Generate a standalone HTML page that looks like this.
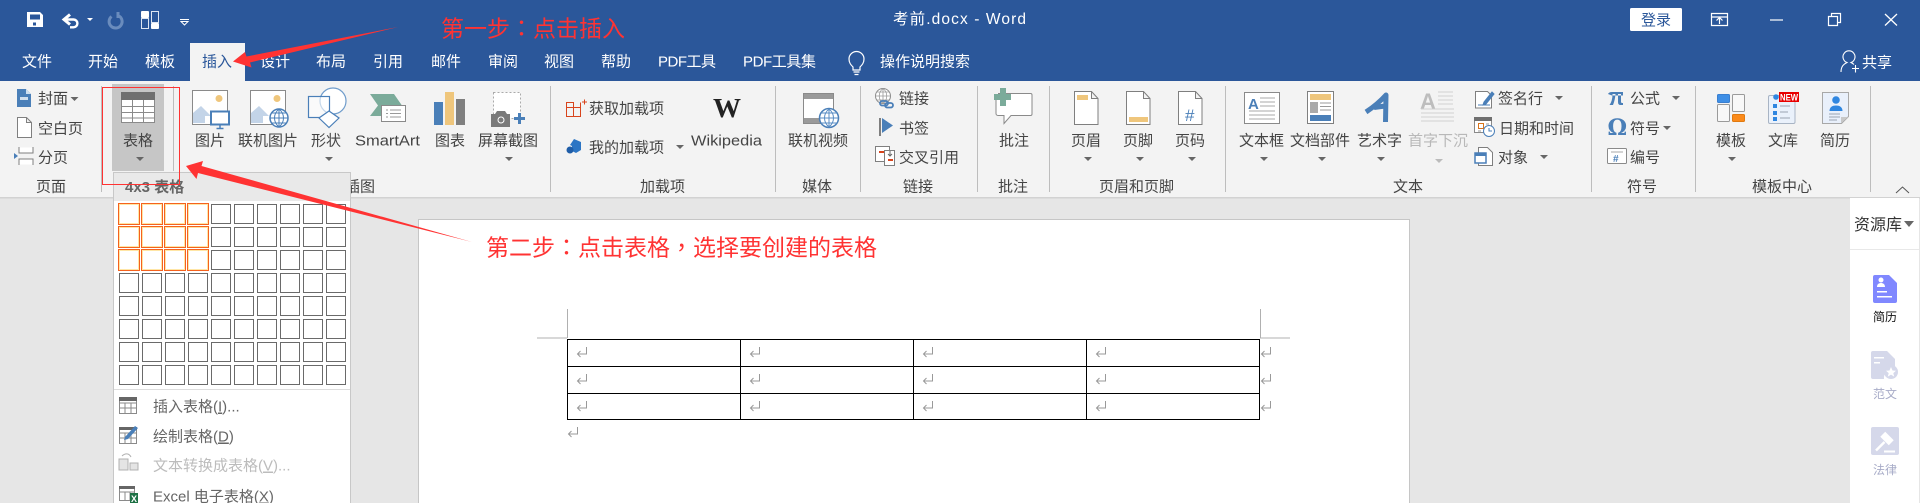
<!DOCTYPE html>
<html lang="zh"><head><meta charset="utf-8"><title>考前.docx - Word</title>
<style>
html,body{margin:0;padding:0;background:#e6e6e6;overflow:hidden;width:1920px;height:503px}
svg{display:block}
text{font-family:"Liberation Sans","Noto Sans CJK SC",sans-serif;font-size:15px;fill:#444}
.w text{fill:#fff}
.ln{fill:none;stroke:#7f7f7f;stroke-width:1}
.b{fill:#4a7fb8}
.lb{fill:#c3d4e8}
.tan{fill:#efc67c}
.g{fill:#7f7f7f}
.red text{fill:#f33;font-size:23px}
.tc{font-family:"Noto Sans CJK TC",sans-serif}
</style></head><body>
<svg width="1920" height="503" viewBox="0 0 1920 503" xmlns="http://www.w3.org/2000/svg">
<defs>
<path id="c" d="M-4-2h8l-4 4z" fill="#666"/>
<path id="r" d="M10.5 0v7H1.5M4.5 4l-3 3 3 3" fill="none" stroke="#999" stroke-width="1"/>
<pattern id="cell" x="119" y="204" width="23" height="23" patternUnits="userSpaceOnUse"><rect x=".5" y=".5" width="19" height="19" fill="#fff" stroke="#6a6a6a"/></pattern>
<pattern id="cellh" x="118" y="203" width="23" height="23" patternUnits="userSpaceOnUse"><rect x=".5" y=".5" width="21" height="21" fill="#fff" stroke="#f5621e"/><rect x="1.5" y="1.5" width="19" height="19" fill="#fff" stroke="#ffe6a6"/></pattern>
</defs>

<!-- backgrounds -->
<rect width="1920" height="503" fill="#e6e6e6"/>
<rect width="1920" height="81" fill="#2b579a"/>
<rect y="81" width="1920" height="116" fill="#f3f3f3"/>
<rect y="197" width="1920" height="1.5" fill="#d2d2d2"/>
<rect x="190" y="43" width="55" height="38" fill="#f3f3f3"/>

<!-- quick access -->
<path d="M27 12h13l3 3v12H27z M30 14.500v5h10v-5z M33 22.500v3h3v-3z" fill="#fff" fill-rule="evenodd"/>
<path d="M70 14.500l-6 5 6 5" fill="none" stroke="#fff" stroke-width="3"/>
<path d="M65 19.500h8.500a3.800 3.800 0 0 1 0 7.800H70" fill="none" stroke="#fff" stroke-width="2.400"/>
<path d="M87 18h6l-3 3z" fill="#fff"/>
<path d="M111.500 16.500a6.500 6.500 0 1 0 7.500-.5M118 12v6" fill="none" stroke="#6a8cbd" stroke-width="3"/>
<rect x="141" y="11" width="8" height="7" rx="1" fill="#fff"/><rect x="141.500" y="18.500" width="7" height="10" fill="none" stroke="#dfe6f2"/>
<rect x="151.500" y="11.500" width="7" height="11" fill="none" stroke="#dfe6f2"/><rect x="151" y="23" width="8" height="6" rx="1" fill="#fff"/>
<path d="M180 19.500h9M181 21.500h7l-3.500 3.500z" fill="none" stroke="#fff"/>

<!-- title and window controls -->
<g class="w">
<text x="893" y="24" textLength="133" lengthAdjust="spacing" style="font-size:15.500px">考前.docx - Word</text>
<text x="22" y="66.500">文件</text><text x="88" y="66.500">开始</text><text x="145" y="66.500">模板</text>
<text x="260" y="66.500">设计</text><text x="316" y="66.500">布局</text><text x="373" y="66.500">引用</text>
<text x="431" y="66.500">邮件</text><text x="488" y="66.500">审阅</text><text x="544" y="66.500">视图</text>
<text x="601" y="66.500">帮助</text><text x="658" y="66.500" textLength="58">PDF工具</text><text x="743" y="66.500" textLength="73">PDF工具集</text>
<text x="880" y="66.500">操作说明搜索</text><text x="1862" y="67.500">共享</text>
</g>
<text x="202" y="66.500" style="fill:#2b579a">插入</text>
<path d="M853 70v-3c-2-2-4-4-4-8a7.500 7.500 0 0 1 15 0c0 4-2 6-4 8v3zM853.500 72h6M854.500 74.500h4" fill="none" stroke="#fff" stroke-width="1.200"/>
<rect x="1630" y="8" width="52" height="23" rx="1.500" fill="#fff"/>
<text x="1641" y="25" style="fill:#2b579a">登录</text>
<path d="M1711.500 13.500h16v12h-16zM1711.500 17h16M1719.500 24v-6M1716.500 20.500l3-3 3 3" fill="none" stroke="#fff" stroke-width="1.200"/>
<path d="M1770 20h13" stroke="#fff" stroke-width="1.200"/>
<path d="M1828.500 16.500h9v9h-9zM1831.500 16.500v-3h9v9h-3" fill="none" stroke="#fff" stroke-width="1.200"/>
<path d="M1885 14l12 11.500M1897 14l-12 11.500" stroke="#fff" stroke-width="1.300"/>
<path d="M1841 72c0-6 3-8 6-9.500a6 6 0 1 1 4 0c1 .5 2 1 3 2M1852 68.500h7M1855.500 65v7.500" fill="none" stroke="#fff" stroke-width="1.100"/>

<!-- group separators -->
<g stroke="#bdbdbd" stroke-width="1">
<path d="M101.500 86v106M173.500 86v85M550.500 86v106M775.500 86v106M860.500 86v106M977.500 86v106M1049.500 86v106M1225.500 86v106M1591.500 86v106M1695.500 86v106M1870.500 86v106"/>
</g>

<!-- table button highlight -->
<rect x="112" y="84" width="52" height="87" fill="#c6c6c6"/>

<!-- page group -->
<path d="M17 89h9l5 5v13H17z" class="b"/><path d="M20 97h8v3h-8z" fill="#fff" opacity=".75"/><path d="M26 89v5h5z" fill="#cfe0f0"/>
<text x="38" y="103.500">封面</text><use href="#c" x="74.500" y="99"/>
<path d="M17.500 117.500h9l5 5v15h-14zM26.500 117.500v5h5" fill="#fff" stroke="#7f7f7f"/>
<text x="38" y="133.500">空白页</text>
<path d="M19 147.500h14v6H19zM19 158.500h14v6H19z" fill="#fff"/><path d="M19 147v6h14v-6M19 165v-6h14v6" fill="none" stroke="#7f7f7f"/><path d="M14 153l4 3-4 3z" class="b"/>
<text x="38" y="162.500">分页</text>
<text x="36" y="191.500">页面</text>

<!-- table -->
<rect x="121" y="92" width="34" height="31" fill="#fff"/>
<rect x="121" y="92" width="34" height="8" fill="#6f6f6f"/>
<path d="M121.500 100v22.500h33V100M121 106.500h34M121 112.500h34M121 118h34M132.500 100v23M143.500 100v23" fill="none" stroke="#8a8a8a"/>
<text x="123" y="145.500">表格</text><use href="#c" x="140" y="159"/>

<!-- illustrations -->
<rect x="192.500" y="90.500" width="35" height="34" fill="#fff" stroke="#8a8a8a"/>
<circle cx="219" cy="98.500" r="3.500" class="tan"/>
<path d="M193 123v-10l8-7 10 10h-6v7z" class="lb"/>
<rect x="211" y="111.500" width="18" height="13" fill="#fff" stroke="#4a7fb8" stroke-width="2"/>
<path d="M220 125v3M216.500 128.500h7" stroke="#4a7fb8" stroke-width="1.500"/>
<text x="195" y="145.500">图片</text>

<rect x="250.500" y="90.500" width="35" height="34" fill="#fff" stroke="#8a8a8a"/>
<circle cx="277" cy="98.500" r="3.500" class="tan"/>
<path d="M251 123v-10l8-7 10 10h-6v7z" class="lb"/>
<circle cx="279" cy="118" r="9" fill="#fff" stroke="#4a7fb8" stroke-width="1.500"/>
<path d="M270 118h18M271.500 113h15M271.500 123h15M279 109v18M279 109c-6 5-6 13 0 18M279 109c6 5 6 13 0 18" fill="none" stroke="#4a7fb8"/>
<text x="238" y="145.500">联机图片</text>

<circle cx="333" cy="101" r="13" fill="#fff" stroke="#6f9ccb" stroke-width="1.200"/>
<rect x="308.500" y="96.500" width="21" height="21" fill="#fff" fill-opacity=".6" stroke="#4a7fb8" stroke-width="1.200"/>
<path d="M329 111l10 7-10 9.500-10-9.500z" fill="#fff" stroke="#4a7fb8" stroke-width="1.200"/>
<text x="311" y="145.500">形状</text><use href="#c" x="329" y="159"/>

<path d="M370 94h24l9 13-6 9h-27l8-10.500z" fill="#7bab9a"/>
<rect x="381.500" y="105.500" width="24" height="16" fill="#fff" stroke="#8a8a8a"/>
<path d="M386 110h2M390 110h11M386 113.500h2M390 113.500h11M386 117h2M390 117h11" stroke="#9a9a9a"/>
<text x="355" y="145.500" textLength="65" lengthAdjust="spacingAndGlyphs">SmartArt</text>

<rect x="434" y="102" width="9" height="23" class="b"/><rect x="445" y="92" width="9" height="33" class="tan"/><rect x="456" y="99" width="9" height="26" class="g"/>
<text x="435" y="145.500">图表</text>

<path d="M493.500 92.500h27v26h-27z" fill="#fff" stroke="#aaa" stroke-dasharray="2 2"/>
<path d="M491 114h4l2-3h8l2 3h3v13h-19z" fill="#7a7a7a"/><circle cx="501" cy="120" r="4" fill="#fff" stroke="#7a7a7a"/><circle cx="501" cy="120" r="2.500" fill="#7a7a7a"/>
<path d="M514 118.500h11M519.500 113v11" stroke="#4a7fb8" stroke-width="3"/>
<text x="478" y="145.500">屏幕截图</text><use href="#c" x="509" y="159"/>
<text x="345" y="191.500">插图</text>

<!-- add-ins -->
<path d="M566.500 107.500h7v9h-7zM573.500 107.500h7v9h-7zM573.500 107.500h7v-5M566.500 107.500v-5h7v5" fill="none" stroke="#d8441c"/>
<path d="M582 102h5M584.500 99.500v5" stroke="#d8441c"/>
<text x="589" y="113.500">获取加载项</text>
<path d="M574 139l7 3v8l-5 3-4-2v-5l-2-1z" fill="#2c75c4"/><circle cx="570" cy="150" r="3.500" fill="#1f5da8"/>
<text x="589" y="152.500">我的加载项</text><use href="#c" x="680" y="147"/>
<text x="713" y="117" style="font-family:'Liberation Serif',serif;font-size:27px;font-weight:bold;fill:#222" textLength="28" lengthAdjust="spacingAndGlyphs">W</text>
<text x="691" y="145.500" textLength="71" lengthAdjust="spacingAndGlyphs">Wikipedia</text>
<text x="640" y="191.500">加载项</text>

<!-- media -->
<rect x="803.500" y="93.500" width="30" height="30" fill="#fff" stroke="#8a8a8a"/>
<rect x="804" y="94" width="29" height="5" fill="#9a9a9a"/><rect x="804" y="118" width="29" height="5" fill="#9a9a9a"/>
<circle cx="829" cy="118" r="9.500" fill="#fff" stroke="#4a7fb8" stroke-width="1.500"/>
<path d="M820 118h18M821 113h16M821 123h16M829 109v18M829 109c-6 5-6 13 0 18M829 109c6 5 6 13 0 18" fill="none" stroke="#5a8dc4"/>
<text x="788" y="145.500">联机视频</text><text x="802" y="191.500">媒体</text>

<!-- links -->
<circle cx="883" cy="96" r="7.500" fill="#fff" stroke="#8a8a8a"/>
<path d="M875.500 96h15M876.500 92h13M876.500 100h13M883 88.500v15M883 88.500c-5 4-5 11 0 15M883 88.500c5 4 5 11 0 15" fill="none" stroke="#9a9a9a" stroke-width=".8"/>
<rect x="880" y="101" width="8" height="4.500" rx="2.250" fill="none" stroke="#4a7fb8" stroke-width="1.800"/>
<rect x="885" y="103" width="8" height="4.500" rx="2.250" fill="none" stroke="#4a7fb8" stroke-width="1.800"/>
<text x="899" y="103.500">链接</text>
<path d="M880 118v18" stroke="#7f7f7f" stroke-width="2"/><path d="M882 118l11 7.500-11 7.500z" class="b"/>
<text x="899" y="133.500">书签</text>
<rect x="875.500" y="146.500" width="14" height="15" fill="#fff" stroke="#7f7f7f"/><rect x="884.500" y="150.500" width="10" height="15" fill="#fff" stroke="#7f7f7f"/>
<path d="M879 152h5" stroke="#d8441c" stroke-width="2"/><path d="M888 160h5" stroke="#d8441c" stroke-width="2"/><path d="M890 151v5M888 154l2 2 2-2" fill="none" stroke="#666"/>
<text x="899" y="162.500">交叉引用</text>
<text x="903" y="191.500">链接</text>

<!-- comment -->
<path d="M998 93.500h32.500a1.500 1.500 0 0 1 1.500 1.500v19a1.500 1.500 0 0 1-1.500 1.500h-19.500l-7 8v-8h-6a2 2 0 0 1-2-2v-19" fill="#fff" stroke="#8a8a8a"/>
<path d="M1000 88h6v6h5v6h-5v6h-6v-6h-6v-6h6z" fill="#7bab9a"/>
<text x="999" y="145.500">批注</text><text x="998" y="191.500">批注</text>

<!-- header/footer -->
<g fill="#fff" stroke="#7f7f7f">
<path d="M1074.500 91.500h17l6.500 7v26h-23.500z M1091.500 91.500v7h6.500"/><path d="M1126.500 91.500h17l6.500 7v26h-23.500z M1143.500 91.500v7h6.500"/><path d="M1178.500 91.500h17l6.500 7v26h-23.500z M1195.500 91.500v7h6.500"/>
</g>
<path d="M1077 95h11v5h-11z" class="tan"/><path d="M1129 117h19v5h-19z" class="tan"/>
<text x="1185" y="121" style="font-size:17px;fill:#4a7fb8">#</text>
<text x="1071" y="145.500">页眉</text><text x="1123" y="145.500">页脚</text><text x="1175" y="145.500">页码</text>
<use href="#c" x="1088" y="159"/><use href="#c" x="1140" y="159"/><use href="#c" x="1192" y="159"/>
<text x="1099" y="191.500">页眉和页脚</text>

<!-- text group -->
<rect x="1244.500" y="92.500" width="35" height="31" fill="#fff" stroke="#8a8a8a"/>
<text x="1248" y="109" style="font-size:15px;font-weight:bold;fill:#4a7fb8">A</text>
<path d="M1260 98h15M1260 102h15M1260 106h15M1249 111h26M1249 115h26M1249 119h26" stroke="#aaa"/>
<text x="1239" y="145.500">文本框</text><use href="#c" x="1264" y="159"/>
<rect x="1307.500" y="91.500" width="26" height="32" fill="#fff" stroke="#7f7f7f"/>
<rect x="1310" y="94" width="21" height="6" class="tan"/><rect x="1310" y="102" width="8" height="11" fill="#aaa"/>
<path d="M1320 103h11M1320 106.500h11M1320 110h11" stroke="#999"/><rect x="1310" y="115" width="21" height="6" class="b"/>
<text x="1290" y="145.500">文档部件</text><use href="#c" x="1322" y="159"/>
<path d="M1366 112Q1378 104 1386 95L1385.500 122M1374 107.500L1385 106" fill="none" stroke="#4a7fb8" stroke-width="5" stroke-linejoin="round"/>
<text x="1357" y="145.500">艺术字</text><use href="#c" x="1381" y="159"/>
<text x="1420" y="109" style="font-size:22px;font-weight:bold;fill:#bdbdbd">A</text>
<path d="M1438 92h15M1438 96h15M1438 100h15M1438 104h15M1421 109h33M1421 113h33M1421 117h33M1421 121h33" stroke="#d0d0d0"/>
<text x="1408" y="145.500" style="fill:#b8b8b8">首字下沉</text>
<path d="M1439-2h8l-4 4z" fill="#bbb" transform="translate(-4 161)"/>

<path d="M1475.500 91.500h12l4 4v12.500h-16z" fill="#fff" stroke="#7f7f7f"/>
<path d="M1484 102l8-10 2 2-8 10-3 1zM1478 105h12" fill="#4a7fb8" stroke="#4a7fb8"/>
<text x="1498" y="103.500">签名行</text><use href="#c" x="1559" y="98"/>
<rect x="1474.500" y="117.500" width="17" height="15" fill="#fff" stroke="#8a8a8a"/><rect x="1474" y="117" width="18" height="4" fill="#6f6f6f"/>
<rect x="1478.500" y="123.500" width="5" height="5" fill="none" stroke="#d8741c"/><path d="M1486 124h3M1486 127h3M1478 131h3" stroke="#999"/>
<circle cx="1489" cy="131" r="5.500" fill="#fff" stroke="#4a7fb8"/><path d="M1489 128v3h3" fill="none" stroke="#4a7fb8"/>
<text x="1499" y="133.500">日期和时间</text>
<path d="M1478.500 147.500h9l5 5v13h-14z" fill="#fff" stroke="#7f7f7f"/>
<rect x="1475" y="153" width="11" height="10" fill="#fff" stroke="#4a7fb8" stroke-width="1.500"/><rect x="1475" y="153" width="11" height="3" class="b"/>
<text x="1498" y="162.500">对象</text><use href="#c" x="1544" y="157"/>
<text x="1393" y="191.500">文本</text>

<!-- symbols -->
<path d="M1608 94q1-2 4-2h11v3.500h-11zM1612.500 94q0 7-3 11h3.500q2-5 2.500-11zM1618 94v8q0 3 2.500 3h2.500v-2h-1q-1 0-1-1.500V94z" class="b"/>
<text x="1630" y="103.500">公式</text><use href="#c" x="1676" y="98"/>
<text x="1607.500" y="135" style="font-size:22px;font-weight:bold;font-family:'DejaVu Serif',serif;fill:#4a7fb8">Ω</text>
<text x="1630" y="133.500">符号</text><use href="#c" x="1667" y="128"/>
<rect x="1607.500" y="148.500" width="19" height="15" rx="1" fill="#fff" stroke="#8a8a8a"/><path d="M1611 152h12" stroke="#aaa"/>
<text x="1613" y="162" style="font-size:10px;font-weight:bold;fill:#4a7fb8">#</text>
<text x="1630" y="162.500">编号</text>
<text x="1627" y="191.500">符号</text>

<!-- template centre -->
<rect x="1717.500" y="94.500" width="12" height="8" rx="1" fill="#3f8fe6" stroke="#3a7fd0"/>
<rect x="1732.500" y="94.500" width="12" height="17" rx="1" fill="#f8f8f8" stroke="#9a9a9a"/>
<rect x="1717.500" y="104.500" width="12" height="17" rx="1" fill="#f8f8f8" stroke="#9a9a9a"/>
<rect x="1732.500" y="114.500" width="12" height="7" rx="1" fill="#fb8a1a" stroke="#e07a10"/>
<text x="1716" y="145.500">模板</text><use href="#c" x="1732" y="159"/>
<rect x="1768.500" y="95.500" width="26.500" height="28" rx="1.500" fill="#eaf1fb" stroke="#a8b4c4"/>
<circle cx="1776" cy="97" r="2.800" fill="#2f86e0"/><rect x="1773" y="104" width="4" height="4" fill="#2f86e0"/><rect x="1773" y="111" width="4" height="4" fill="#2f86e0"/><rect x="1773" y="117" width="4" height="4" fill="#2f86e0"/>
<path d="M1780 106h10M1780 112h8M1780 118h10" stroke="#9aa4b2"/>
<rect x="1779" y="92" width="20" height="10" fill="#e80000"/>
<text x="1780" y="100.500" textLength="18" lengthAdjust="spacingAndGlyphs" style="font-size:9px;font-weight:bold;fill:#fff">NEW</text>
<path d="M1822.500 92.500h26v24l-7 7h-19z" fill="#e9f0fb" stroke="#a8a8a8"/><path d="M1848 117h-7v6z" fill="#c8c8c8"/>
<circle cx="1836" cy="100" r="3.800" fill="#2f86e0"/><path d="M1829.500 111c0-4 3-5.500 6.500-5.500s6.500 1.500 6.500 5.500z" fill="#2f86e0"/>
<path d="M1829 114h11M1829 117h11M1829 120h8" stroke="#9aa4b2"/>
<text x="1768" y="145.500">文库</text><text x="1820" y="145.500">简历</text>
<text x="1752" y="191.500">模板中心</text>
<path d="M1896 193l6.500-6 6.500 6" fill="none" stroke="#555"/>

<!-- document page -->
<rect x="418.500" y="219.500" width="991" height="290" fill="#fff" stroke="#c6c6c6"/>
<path d="M567.500 309v29M537 338h30M1260.500 309v29M1260 338h30" fill="none" stroke="#b0b0b0"/>
<path d="M567 339.500h693M567 366.500h693M567 393.500h693M567 419.500h693M567.500 339v81M740.500 339v81M913.500 339v81M1086.500 339v81M1259.500 339v81" fill="none" stroke="#000"/>
<use href="#r" x="576" y="347"/><use href="#r" x="749" y="347"/><use href="#r" x="922" y="347"/><use href="#r" x="1095" y="347"/><use href="#r" x="1260" y="347"/>
<use href="#r" x="576" y="374"/><use href="#r" x="749" y="374"/><use href="#r" x="922" y="374"/><use href="#r" x="1095" y="374"/><use href="#r" x="1260" y="374"/>
<use href="#r" x="576" y="401"/><use href="#r" x="749" y="401"/><use href="#r" x="922" y="401"/><use href="#r" x="1095" y="401"/><use href="#r" x="1260" y="401"/>
<use href="#r" x="567" y="427"/>

<!-- right panel -->
<rect x="1850" y="198" width="69" height="305" fill="#fff"/>
<path d="M1850 249.500h69" stroke="#e8e8e8"/>
<text x="1854" y="230" style="font-size:16px;fill:#333">资源库</text>
<path d="M1904 221h10l-5 6z" fill="#666"/>
<path d="M1875 275h14l8 8v18a2 2 0 0 1-2 2h-20a2 2 0 0 1-2-2v-24a2 2 0 0 1 2-2z" fill="#8088ff"/>
<circle cx="1881" cy="280" r="2.500" fill="#fff"/><path d="M1877 287c0-3 2-4 4-4s4 1 4 4zM1877 291h10v1.500h-10zM1877 296h15v1.500h-15z" fill="#fff"/>
<text x="1873" y="321" style="font-size:12px;fill:#111">简历</text>
<path d="M1873 351h14l8 8v10a9 9 0 0 0-11 10h-11a2 2 0 0 1-2-2v-24a2 2 0 0 1 2-2z" fill="#d5d8ea"/>
<path d="M1874 357h10v1.500h-10zM1874 362h6v1.500h-6z" fill="#fff"/>
<circle cx="1891" cy="372" r="7" fill="#d5d8ea"/><path d="M1891 367l1.500 3.500 3.500.3-2.700 2.300.9 3.500-3.200-2-3.200 2 .9-3.500-2.700-2.300 3.500-.3z" fill="#fff"/>
<text x="1873" y="398" style="font-size:12px;fill:#a8acc8">范文</text>
<rect x="1871" y="427" width="28" height="28" rx="2" fill="#d5d8ea"/>
<rect x="1881" y="435" width="12" height="7" transform="rotate(45 1887 438.500)" fill="#fff"/>
<path d="M1884.500 442L1876 450.500" stroke="#fff" stroke-width="2.500"/><path d="M1884 451.500h11" stroke="#fff" stroke-width="2"/>
<text x="1873" y="474" style="font-size:12px;fill:#a8acc8">法律</text>

<!-- dropdown menu -->
<rect x="113.500" y="172.500" width="237" height="340" fill="#fff" stroke="#c8c8c8"/>
<rect x="114" y="173" width="236" height="28" fill="#e9e9e9"/>
<text x="125" y="192" style="font-weight:bold;fill:#666">4x3 表格</text>
<rect x="119" y="204" width="230" height="184" fill="url(#cell)"/>
<rect x="118" y="203" width="92" height="69" fill="#fff"/>
<rect x="118" y="203" width="92" height="69" fill="url(#cellh)"/>
<path d="M114 389.500h236" stroke="#ddd"/>
<path d="M119.500 398.500h17v15h-17zM119.500 403h17M119.500 408h17M125 403v10M131 403v10" fill="none" stroke="#8a8a8a"/><rect x="119" y="397" width="18" height="4" fill="#666"/>
<text x="153" y="411.500" style="fill:#666">插入表格(<tspan text-decoration="underline">I</tspan>)...</text>
<path d="M119.500 428.500h17v15h-17zM119.500 433h17M119.500 438h17M125 433v10M131 433v10" fill="none" stroke="#8a8a8a"/><rect x="119" y="427" width="18" height="3" fill="#666"/>
<path d="M125 437l10-11 3 2-10 11-4 1z" fill="#4a7fb8"/>
<text x="153" y="441.500" style="fill:#666">绘制表格(<tspan text-decoration="underline">D</tspan>)</text>
<path d="M119 459h9v11h-9zM130 463h8v7h-8z" fill="#e4e4e4" stroke="#b0b0b0"/><path d="M122 456c3-3 7-3 9 1" fill="none" stroke="#b0b0b0"/>
<text x="153" y="470.500" style="fill:#bcbcbc">文本转换成表格(<tspan text-decoration="underline">V</tspan>)...</text>
<path d="M119.500 487.500h15v13h-15zM119.500 492h15M125 492v9M130 492v9" fill="none" stroke="#8a8a8a"/><rect x="119" y="486" width="16" height="3" fill="#666"/>
<rect x="130" y="493" width="8" height="10" fill="#1e7145"/><text x="131" y="502" style="font-size:9px;font-weight:bold;fill:#fff">X</text>
<text x="153" y="501.500" style="fill:#666">Excel 电子表格(<tspan text-decoration="underline">X</tspan>)</text>

<!-- annotations -->
<rect x="102.500" y="87.500" width="77" height="97" fill="none" stroke="#f33"/>
<path d="M233 61.500L245 52l1.500 4.500L398 27 250 62.500l1.500 5z" fill="#f33"/>
<path d="M186 166l17-5-1.500 5L472 242 198 173l-1.500 6z" fill="#f33"/>
<g class="red">
<text x="441" y="36.500">第一步<tspan class="tc" lang="zh-TW">：</tspan>点击插入</text>
<text x="486" y="255.500">第二步<tspan class="tc" lang="zh-TW">：</tspan>点击表格<tspan class="tc" lang="zh-TW">，</tspan>选择要创建的表格</text>
</g>
</svg>
</body></html>
